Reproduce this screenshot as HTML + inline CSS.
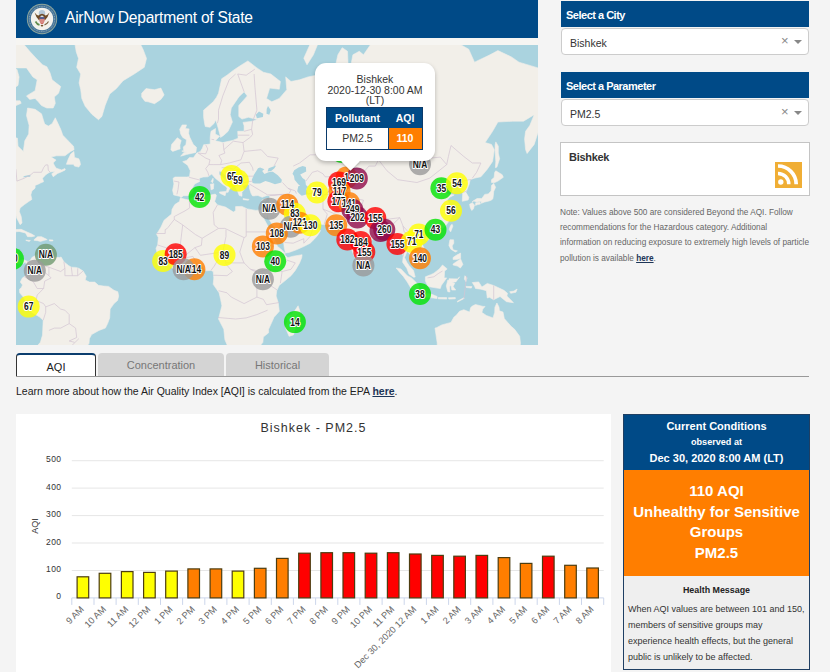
<!DOCTYPE html>
<html><head><meta charset="utf-8">
<style>
*{box-sizing:border-box;margin:0;padding:0}
html,body{width:830px;height:672px;overflow:hidden;background:#f4f4f4;font-family:"Liberation Sans",sans-serif;color:#333}
.abs{position:absolute}
#hdr{left:16px;top:0;width:522px;height:38px;background:#004a87}
#hdr .t{left:49px;top:8.5px;font-size:15.6px;letter-spacing:-0.25px;color:#fff;white-space:nowrap}
#strip{left:16px;top:38px;width:522px;height:7px;background:#f6f5f2}
#map{left:16px;top:45px;width:522px;height:300px;background:#aad3df;overflow:hidden}
.ph{left:561px;width:248px;height:26px;background:#004a87;color:#fff;font-weight:bold;font-size:11px;letter-spacing:-0.5px;padding:8px 0 0 5px}
.sel{left:561px;width:248px;height:27px;background:#fff;border:1px solid #ccc;border-radius:4px;font-size:10.5px;color:#333;padding:8px 0 0 8px}
.sel .x{position:absolute;left:219px;top:4px;font-size:13px;color:#888}
.sel .c{position:absolute;left:232px;top:11px;width:0;height:0;border-left:4px solid transparent;border-right:4px solid transparent;border-top:4px solid #888}
#cbox{left:560px;top:142px;width:250px;height:54px;background:#fff;border:1px solid #c4c4c4}
#cbox .n{left:8px;top:7.5px;font-weight:bold;font-size:11px;letter-spacing:-0.3px;color:#333}
#rss{left:775px;top:162px;width:27px;height:26px;background:#f0ae35}
#note{left:560px;top:205px;width:260px;white-space:nowrap;font-size:8.25px;line-height:15.2px;color:#666}
#note a{color:#1d3557;font-weight:bold;text-decoration:underline}
.tab{top:353px;height:23px;font-size:11px;text-align:center;padding-top:6px;border-radius:4px 4px 0 0}
#t1{left:16px;width:80px;background:#fff;border:1px solid #333;border-top:2px solid #0b3d6e;border-bottom:none;color:#222}
#t2{left:98px;width:126px;background:#d4d4d4;color:#777}
#t3{left:226px;width:103px;background:#d4d4d4;color:#777}
#tline{left:16px;top:376px;width:793px;height:1px;background:#999}
#learn{left:16px;top:385px;font-size:10.5px;color:#222;white-space:nowrap}
#learn a{color:#1d3557;text-decoration:underline;font-weight:bold}
#chart{left:16px;top:414px;width:595px;height:258px;background:#fff}
#cc{left:623px;top:414px;width:187px;height:256px;border:1px solid #1f3f63;background:#efefef}
#cch{left:0;top:0;width:185px;height:55px;background:#004a87;color:#fff;font-weight:bold;text-align:center}
#cco{left:0;top:55px;width:185px;height:106px;background:#ff7e00;color:#fff;font-weight:bold;text-align:center;font-size:15px;line-height:20.7px;padding-top:11px}
#hm{left:0;top:162.5px;width:185px;text-align:center}
</style></head><body>
<div id="hdr" class="abs">
  <svg class="abs" style="left:10px;top:3px" width="32" height="32" viewBox="0 0 32 32">
    <circle cx="16" cy="16" r="15.2" fill="#8fa79c"/>
    <circle cx="16" cy="16" r="14.3" fill="#3f6f96"/>
    <circle cx="16" cy="16" r="12.6" fill="none" stroke="#b9c9c8" stroke-width="0.7" stroke-dasharray="1 0.8"/>
    <circle cx="16" cy="16" r="11.2" fill="#f3f1eb"/>
    <circle cx="16" cy="10.2" r="3.2" fill="#b4c8d6"/>
    <path d="M8.6 9.5 Q10 14.5 13.2 17.6 L14.6 13.2 L16 12.2 L17.4 13.2 L18.8 17.6 Q22 14.5 23.4 9.5 Q21.5 12.2 19.4 12.6 Q18.6 11.2 16 10.8 Q13.4 11.2 12.6 12.6 Q10.5 12.2 8.6 9.5Z" fill="#6e4b26"/>
    <path d="M13.6 14.2 h4.8 v3.8 q0 2.6 -2.4 3.4 q-2.4 -0.8 -2.4 -3.4Z" fill="#c8504a"/>
    <rect x="13.6" y="14.2" width="4.8" height="1.6" fill="#3b5f9a"/>
    <path d="M14.8 16 v4 M16 16 v4.6 M17.2 16 v4" stroke="#f3f1eb" stroke-width="0.5"/>
    <path d="M9.5 18.5 q1.5 2.8 4 3.4" stroke="#5f8a4a" stroke-width="1.6" fill="none"/>
    <path d="M22.5 18.5 q-1.5 2.8 -4 3.4" stroke="#7a6040" stroke-width="1.1" fill="none"/>
    <path d="M14.5 22 l1.5 2 l1.5 -2Z" fill="#6e4b26"/>
  </svg>
  <div class="t abs">AirNow Department of State</div>
</div>
<div id="strip" class="abs"></div>
<div id="map" class="abs"><svg width="522" height="300" viewBox="0 0 522 300" style="position:absolute;left:0;top:0"><rect width="522" height="300" fill="#aad3df"/><path d="M165.0 152.6L163.5 151.3L157.7 149.9L156.6 145.3L157.9 139.0L157.1 133.2L159.0 132.0L170.5 132.0L173.5 131.8L174.3 125.8L171.6 120.2L166.7 116.7L170.5 115.4L173.5 112.5L177.3 112.8L180.7 108.1L184.4 106.4L186.5 103.0L187.6 99.8L194.2 99.1L194.2 92.1L195.0 86.3L199.5 83.5L199.3 89.0L203.6 91.3L199.3 95.8L206.8 97.6L216.6 95.4L222.1 93.2L221.7 86.3L228.1 86.3L228.1 80.7L227.0 77.4L236.6 76.2L241.3 74.5L232.4 72.3L226.0 74.1L222.8 71.5L222.8 60.6L231.3 50.9L228.1 46.8L222.8 51.9L215.3 63.0L214.2 69.7L216.4 77.0L212.1 86.3L207.8 90.2L204.6 92.4L202.3 83.5L200.8 78.3L199.5 74.9L198.2 78.3L194.0 82.3L189.3 81.5L188.6 78.7L187.6 71.9L187.6 65.2L191.8 61.6L197.2 56.8L200.4 52.4L202.5 48.3L205.7 33.7L211.0 30.2L217.2 25.4L223.8 21.0L231.9 15.9L240.9 22.9L247.3 27.2L254.8 29.0L264.4 36.5L263.3 44.2L253.7 43.1L250.5 53.4L255.8 56.8L263.3 53.4L270.8 44.7L269.7 31.9L275.0 36.5L283.6 34.8L292.1 31.9L300.6 30.2L304.9 26.0L317.7 29.0L321.9 9.8L326.2 2.7L331.5 6.3L332.6 31.9L336.9 9.8L343.3 6.3L347.5 9.8L368.9 -21.3L390.2 -40.3L411.5 -4.8L417.9 -1.0L443.5 -1.0L452.7 4.2L458.5 17.2L474.0 9.8L481.9 5.6L495.4 11.9L503.0 17.2L522.0 22.9L550.2 26.0L550.2 65.2L524.6 65.2L522.4 86.3L518.2 99.4L511.1 108.5L509.6 104.7L508.6 93.9L509.6 86.3L513.9 80.3L518.2 69.7L507.5 76.2L496.9 76.2L481.9 77.0L476.6 86.3L469.1 97.6L475.5 99.4L478.3 104.7L476.6 116.4L471.3 124.2L464.9 131.8L458.2 133.2L454.2 134.7L453.1 139.5L449.9 147.3L452.9 152.6L452.1 155.0L446.3 156.3L446.7 148.6L443.5 143.2L437.6 140.4L435.0 139.2L430.7 144.0L428.6 145.1L430.3 148.6L438.2 149.9L433.3 152.6L431.2 155.2L434.6 161.6L436.9 165.6L436.7 169.8L432.9 176.1L429.7 180.8L425.4 184.6L420.5 186.2L413.7 188.0L412.0 190.8L409.4 187.8L404.5 189.9L402.6 193.7L406.2 199.3L409.8 207.0L409.8 210.3L404.7 212.9L400.9 216.6L400.4 213.1L396.6 211.4L392.3 207.7L391.3 205.9L388.5 212.5L390.8 217.2L393.0 220.5L397.5 225.4L399.2 232.0L397.7 232.2L393.0 229.0L390.8 223.3L386.6 217.2L387.2 211.4L385.3 201.5L381.7 198.6L378.0 200.4L377.8 194.6L374.2 188.0L372.1 185.5L367.8 187.3L364.6 186.9L362.0 190.1L358.2 192.8L352.4 199.1L348.0 206.6L347.1 212.9L343.9 215.9L342.2 217.7L339.6 214.2L336.9 208.1L334.1 200.4L332.2 193.7L332.0 188.7L327.3 189.6L323.7 185.7L325.1 185.0L319.8 180.4L313.4 179.2L308.1 179.7L300.0 178.2L296.8 174.9L292.1 175.9L286.7 173.0L284.2 169.6L280.4 167.9L279.3 169.3L282.9 176.1L284.6 178.7L287.0 179.2L286.1 181.5L292.1 181.8L296.8 178.7L297.0 176.8L297.2 180.4L302.3 183.4L304.5 185.7L301.7 190.3L298.5 193.9L294.2 198.2L288.2 201.3L280.4 204.8L272.9 207.5L269.5 207.9L268.2 202.6L267.8 198.6L264.4 192.6L260.5 188.0L259.0 182.9L255.8 178.7L252.0 172.5L251.6 169.1L250.1 173.2L246.4 168.1L248.4 174.7L252.6 182.2L256.2 189.2L259.0 196.0L261.6 201.5L264.8 204.0L269.0 208.3L269.0 210.3L271.8 212.7L277.2 211.2L286.1 209.7L285.7 212.7L283.6 217.9L279.3 225.4L275.0 230.7L268.6 236.1L263.3 240.3L260.7 245.7L260.1 251.0L262.2 257.5L263.3 266.3L258.0 272.3L252.6 284.3L252.6 287.8L247.3 292.0L246.9 297.3L244.1 300.9L240.9 305.9L236.6 309.6L215.3 309.6L208.9 294.8L207.8 284.3L202.5 274.0L205.9 260.8L204.6 254.3L203.1 247.8L197.2 239.3L197.8 232.9L197.2 226.5L195.0 225.4L189.7 225.8L186.5 221.5L181.2 221.5L173.7 224.3L168.4 223.9L160.9 225.6L156.6 223.3L152.4 220.0L148.5 216.8L144.9 211.8L141.1 208.3L140.0 203.3L141.7 199.8L142.3 192.6L140.6 189.2L144.9 182.2L148.1 175.2L155.6 169.1L156.0 164.4L158.8 159.6L163.5 156.5L164.3 153.1L172.6 155.0L179.0 151.3L187.6 150.5L195.0 149.9L199.3 149.1L200.4 150.5L198.7 156.5L201.4 159.9L209.5 162.1L217.4 167.1L219.6 165.4L219.6 161.6L226.0 161.4L231.3 163.9L239.8 165.4L245.8 164.9L250.1 164.6L251.6 160.9L253.5 156.0L253.7 150.5L250.5 150.7L246.2 152.3L242.0 150.5L236.6 151.0L235.1 148.6L233.4 143.2L233.4 140.4L232.4 139.5L226.0 140.4L228.1 144.5L226.0 147.3L226.0 151.3L223.2 150.5L221.7 146.4L220.0 143.2L218.5 139.0L217.9 134.7L211.0 131.8L205.9 126.7L203.1 126.1L203.1 129.4L205.9 131.8L211.0 137.8L216.4 141.5L213.2 144.5L212.1 147.3L210.2 147.3L211.2 143.2L210.0 141.5L206.8 139.5L203.6 136.7L199.3 133.2L195.7 129.1L191.8 131.8L187.1 132.0L183.3 133.2L183.7 136.4L178.6 139.0L176.3 143.2L177.3 145.3L175.4 148.3L172.4 150.7L167.5 150.7ZM164.7 111.2L170.5 109.5L179.9 107.4L180.5 102.3L177.3 99.4L173.7 92.1L172.6 88.3L173.1 83.9L169.4 83.5L170.5 79.9L166.2 79.9L163.7 84.3L164.7 89.0L166.7 92.4L170.5 94.7L169.9 99.8L167.3 101.9L167.7 105.7L165.8 106.1L170.5 107.4L167.9 107.4ZM164.1 104.0L163.9 100.1L165.2 95.4L161.3 92.8L158.8 95.8L155.6 99.4L154.9 104.7L156.6 106.4L162.4 104.4ZM125.7 48.3L130.0 43.6L138.5 44.7L144.9 43.1L148.1 49.9L144.9 54.4L138.5 58.7L132.1 56.8L128.9 56.3L125.7 51.9ZM194.4 139.2L197.8 138.7L197.4 144.0L195.0 144.8L194.8 141.8ZM195.2 136.4L197.0 133.2L197.2 135.5L196.5 137.8ZM203.3 147.0L210.2 146.4L209.1 150.7L203.8 148.3ZM227.0 153.6L233.0 154.4L232.4 155.2L227.2 154.7ZM245.8 155.0L250.7 153.6L249.2 155.5L246.4 156.0ZM347.3 214.0L350.3 216.8L351.4 219.6L348.6 222.4L347.1 220.0ZM475.5 137.5L478.1 137.8L481.9 136.1L487.3 132.3L486.2 129.7L479.8 125.8L478.7 127.3L478.1 132.6L475.5 134.7ZM477.7 138.4L479.6 142.3L477.7 146.4L477.4 150.2L476.8 153.9L475.1 155.2L473.0 156.0L468.7 157.0L465.3 158.3L465.1 156.3L460.6 157.0L457.8 156.0L456.1 157.0L457.2 156.0L461.0 153.6L465.9 153.4L468.7 149.4L472.3 148.9L475.1 145.9L475.5 140.4ZM459.5 160.4L459.7 157.8L464.0 157.3L464.4 159.1L461.7 159.6ZM453.6 159.3L456.3 157.8L458.5 159.9L457.4 164.1L455.7 165.4L454.2 162.4ZM479.8 96.9L482.3 101.2L482.3 108.1L483.6 113.8L480.9 122.1L479.4 122.7L479.8 116.4L479.1 106.4L479.1 100.1ZM436.1 179.2L436.9 181.1L434.6 186.9L433.1 184.3L434.6 180.6ZM408.5 193.3L412.6 191.2L413.7 192.4L412.2 195.1L410.0 195.3ZM433.9 194.8L437.6 194.8L437.8 198.2L436.1 200.9L437.1 204.8L441.4 205.9L439.3 207.0L434.8 204.2L432.9 200.4ZM437.1 219.0L440.3 216.8L444.6 214.0L446.9 219.4L444.4 223.0L441.4 221.1L437.1 220.0ZM437.1 212.5L440.3 210.3L444.6 208.1L444.6 213.6L440.3 214.6L437.1 214.6ZM409.4 231.8L414.7 229.7L417.9 228.2L423.3 223.9L426.5 220.0L431.2 223.9L428.6 226.0L428.2 232.9L430.7 232.9L425.4 240.3L424.3 243.5L421.1 243.1L414.9 242.0L412.0 241.4L409.4 236.1ZM380.2 223.0L384.9 223.9L391.3 230.7L395.5 232.9L399.8 237.1L403.0 241.4L402.6 247.6L399.8 247.6L395.1 243.5L391.3 237.1L387.4 231.4L383.8 227.5ZM401.3 249.5L403.0 247.6L407.9 248.5L413.7 248.7L417.1 249.8L421.1 251.5L420.9 253.6L413.7 252.6L407.3 251.7L401.9 249.8ZM422.2 252.6L430.7 252.6L430.7 254.1L422.2 253.8ZM432.4 252.8L439.3 252.6L439.3 253.8L432.9 254.1ZM441.4 256.2L447.8 252.8L448.2 253.4L441.4 257.1ZM431.8 246.7L433.9 247.0L433.5 241.4L435.0 240.5L435.8 245.0L439.7 245.0L437.1 241.4L438.8 238.2L436.1 237.1L439.9 236.9L443.5 231.8L442.2 233.9L433.1 233.7L432.9 235.6L431.8 235.0L430.3 241.0ZM448.9 230.7L451.0 232.9L449.9 236.7L448.4 233.9ZM449.9 241.4L455.9 241.6L455.3 243.1L450.4 242.5ZM456.3 237.6L462.7 236.9L465.9 242.0L471.3 238.4L477.7 240.5L487.9 245.3L491.5 248.3L490.9 251.0L495.4 255.6L497.5 257.7L490.5 256.7L484.1 251.5L477.7 254.7L473.4 252.3L471.3 253.0L470.4 245.7L464.9 244.2L459.5 243.5L458.5 241.0ZM493.7 246.7L497.9 246.1L501.1 244.0L500.0 247.2L494.7 248.3ZM282.1 260.8L284.4 267.8L282.5 272.9L280.4 279.7L277.4 289.9L273.1 291.3L270.1 284.3L269.3 282.0L271.6 276.3L270.8 271.8L275.9 269.1L278.9 265.6ZM419.0 283.1L420.5 282.7L425.8 279.9L435.0 277.4L437.8 272.3L440.5 270.0L443.5 266.3L447.8 264.7L453.6 267.1L454.6 262.8L456.3 261.0L459.5 259.5L467.0 261.4L469.1 261.4L466.8 264.1L465.9 267.4L470.4 270.5L477.0 272.9L478.7 267.4L478.9 262.3L480.9 258.0L483.0 262.1L483.4 265.8L487.0 267.1L488.3 273.6L491.5 277.2L495.1 281.3L498.6 284.3L503.7 291.3L504.5 298.5L503.2 305.9L496.9 320.1L422.2 314.8L421.1 297.3ZM287.8 13.2L294.2 -1.0L298.5 -17.0L309.1 -25.8L321.9 -30.5L304.9 -8.7L297.4 9.8L291.0 19.8ZM-79.1 191.4L-79.1 74.1L-25.7 74.1L-19.3 86.3L-10.8 90.2L1.4 93.2L2.0 101.2L7.3 106.4L8.8 95.8L12.7 89.0L13.1 80.3L10.5 70.6L11.6 63.0L19.1 64.3L25.5 68.8L27.6 75.7L28.7 79.1L32.3 81.1L36.1 78.7L39.3 72.8L44.7 84.3L46.8 90.2L52.1 95.8L57.5 101.2L58.1 104.7L54.7 106.4L48.9 110.8L40.4 110.8L35.1 112.1L40.0 115.1L37.2 118.0L38.7 121.1L40.4 123.3L45.7 124.9L48.9 123.6L49.3 124.9L46.4 126.4L41.5 128.5L37.2 131.8L35.7 128.8L39.3 126.4L34.0 127.0L30.1 129.4L26.5 133.2L27.6 136.7L24.4 138.1L23.3 138.7L19.1 140.4L19.1 143.2L15.9 145.9L14.8 149.9L15.9 154.4L12.7 156.5L8.4 159.6L4.1 162.9L3.3 166.6L5.2 171.5L6.0 178.0L4.1 179.7L2.4 176.3L0.5 172.7L-0.1 169.8L-2.3 167.9L-15.1 170.3L-30.0 177.5L-30.0 189.2L-27.9 193.7L-17.2 194.8L-16.1 189.2L-8.7 188.0L-9.7 196.0L-10.8 200.4L-2.3 200.9L-1.2 203.7L-1.8 211.4L-0.1 213.6L3.1 215.7L7.3 214.6L11.6 216.4L13.7 216.2L15.9 212.5L18.6 211.0L22.3 209.4L24.8 208.3L24.4 211.8L27.2 210.3L31.2 212.5L36.1 212.3L40.4 212.3L43.6 212.5L45.1 212.0L47.9 216.8L52.5 220.5L55.3 222.2L59.6 222.4L62.8 223.3L67.1 226.0L70.2 231.2L69.2 235.0L73.4 237.1L78.8 237.1L82.4 240.3L87.3 241.0L92.6 241.4L98.0 245.3L101.8 246.7L102.7 251.0L101.6 255.4L98.0 258.6L94.1 264.1L93.7 272.9L91.6 278.6L89.4 283.1L83.0 285.4L75.6 289.6L73.4 293.7L73.0 298.5L70.2 302.1L48.9 328.2L16.9 328.2L20.1 302.1L24.4 297.3L26.5 290.1L27.2 275.2L23.3 271.8L15.9 267.4L13.7 263.0L11.0 258.6L7.3 252.1L3.7 247.8L3.5 244.2L5.6 242.3L6.5 239.9L4.3 237.1L6.3 233.1L8.4 231.6L10.5 229.5L12.0 226.5L11.8 220.9L10.5 219.6L9.5 217.0L6.3 219.0L5.2 217.4L2.8 219.0L-0.8 217.2L-6.1 213.6L-15.1 207.0L-47.1 191.4ZM-15.1 2.7L6.3 -2.5L13.7 6.3L20.1 13.2L26.5 19.8L30.8 21.7L34.0 27.8L36.1 34.8L44.7 41.5L42.5 48.3L38.3 51.9L39.3 58.3L37.2 63.0L30.8 63.0L25.5 60.6L22.3 56.8L19.1 53.4L13.7 54.4L10.5 50.9L19.1 45.7L21.2 34.8L16.9 31.9L10.5 22.9L-2.3 22.9L-15.1 22.9ZM-6.5 55.8L4.1 55.8L5.2 58.3L-2.3 61.6L-8.7 58.3ZM-36.4 74.1L-23.6 69.7L-15.1 55.8L-8.7 53.4L-7.6 43.1L-2.3 43.1L2.0 40.4L3.1 31.9L0.9 24.2L-4.4 24.2L-15.1 29.0L-36.4 34.8ZM50.4 119.3L57.5 119.3L58.5 121.1L62.8 122.1L64.5 119.6L63.9 116.4L62.8 113.8L58.5 112.5L57.9 106.4L54.7 109.1L52.1 114.4ZM-4.4 187.1L-0.1 184.6L5.2 184.3L11.6 187.3L15.6 188.9L18.8 191.0L15.9 191.7L11.6 191.7L9.5 188.0L3.1 186.4L-3.3 187.3ZM18.0 194.8L21.6 191.7L25.5 191.7L28.7 193.3L31.2 194.6L28.7 195.3L24.4 196.4L21.6 195.7L18.0 195.3ZM9.7 195.1L14.4 195.5L13.1 196.4L10.1 195.5ZM33.3 194.8L37.0 195.1L36.8 196.0L33.6 196.0ZM59.1 0.0L60.2 6.7L62.5 13.4L60.7 22.3L64.7 29.0L63.1 37.9L64.7 44.6L65.8 53.5L69.2 61.3L75.8 69.2L82.5 74.7L85.9 71.4L89.2 60.2L93.7 49.1L100.4 43.5L107.1 35.7L118.2 29.0L128.3 22.3L130.5 13.4L127.1 4.5L124.9 0.0L124.9 -10.0L59.0 -10.0Z" fill="#f2efe9" stroke="#f2efe9" stroke-width="0.6" stroke-linejoin="round"/><path d="M236.6 138.1L239.0 138.4L244.1 138.4L249.4 136.1L253.7 137.3L259.0 139.2L265.4 137.5L265.8 134.7L261.8 130.3L256.9 126.7L254.8 126.7L252.6 127.3L248.4 129.1L246.2 126.1L248.4 124.2L244.1 122.4L242.0 123.3L240.0 126.4L237.9 129.7L235.8 134.7ZM251.6 126.4L252.6 123.3L260.1 120.5L258.4 123.3L255.2 126.1ZM282.5 122.4L286.7 121.1L289.9 122.1L290.2 126.4L285.7 128.8L284.2 129.4L286.5 132.9L289.3 135.0L289.9 140.1L291.9 141.8L290.4 144.0L291.9 149.1L285.7 150.7L283.1 148.6L281.2 146.2L282.3 141.2L284.2 140.6L282.5 139.5L278.6 134.7L278.0 130.9L276.5 128.8L278.2 125.2ZM6.7 132.3L14.2 131.8L14.4 129.7L8.4 130.9ZM240.9 73.2L246.9 71.9L247.3 68.8L243.0 66.6L239.8 69.7ZM250.5 68.8L253.3 69.7L254.8 65.2L252.0 61.1L250.7 63.9ZM333.7 123.6L336.9 122.4L345.4 123.3L344.3 124.9L335.8 124.5Z" fill="#aad3df"/><path d="M173.3 155.2L173.7 162.9L169.0 165.9L158.3 171.5L158.3 174.4L166.7 179.9L179.5 189.6L186.1 193.3L202.5 183.4L198.2 179.9L197.2 167.4L201.4 159.9M158.3 174.4L151.3 183.4L149.2 184.6L149.2 188.5L140.6 188.5M166.7 179.9L164.1 201.5L151.3 203.1L141.7 200.0M230.2 163.9L230.2 186.9L255.8 186.9M202.5 183.4L208.9 183.4L228.1 192.6L230.2 191.4L230.2 186.9M228.1 192.6L223.8 207.0L227.0 215.7L228.1 217.9L234.5 224.3L240.9 227.5L251.6 224.3L266.1 226.5L264.4 238.2M210.0 184.6L210.0 191.4L206.8 207.0L184.4 210.3L179.0 202.6L165.2 213.6L158.8 219.0M186.1 193.3L185.4 200.4L179.0 202.6M206.8 207.0L210.0 217.9L228.1 217.9M259.0 196.0L254.8 204.8L249.4 215.7L251.6 224.3M267.6 208.1L269.3 214.6L279.3 217.9L275.0 224.3L266.1 226.5M202.5 245.7L211.0 247.8L215.3 252.1L228.1 258.6L240.9 252.1L240.9 237.1L239.8 225.4L234.5 224.3M261.2 245.0L249.4 237.1L240.9 237.1M263.3 257.5L250.5 259.7L247.3 254.3L240.9 252.1M202.1 272.5L219.6 274.0L230.2 272.9L240.9 269.6L251.6 265.2M197.2 230.3L201.0 230.3L211.0 230.7L216.4 226.5L208.9 217.9M152.4 220.0L159.8 216.8L165.2 213.6L176.9 211.4L182.2 221.5M195.0 225.4L198.2 221.1L206.8 207.0M173.1 132.3L183.7 135.0M158.1 136.1L163.0 137.0L162.0 144.5L160.9 149.4M182.2 108.1L189.7 113.1L194.0 114.8L192.9 119.6L189.7 123.6L191.8 127.3L192.9 130.9M195.5 94.3L198.2 94.7M207.2 98.0L207.8 104.7L208.9 108.1L202.9 110.5L205.7 115.4L204.6 119.6L197.2 119.6L192.9 119.6M189.7 99.8L191.8 104.0L189.7 108.8L182.2 108.1M207.8 104.7L217.4 96.2L227.0 97.6L228.1 106.4L224.9 114.8L213.2 118.0L204.6 119.6M205.7 122.7L212.1 122.7L217.4 124.2L224.9 118.0L233.4 117.3L236.6 122.7L237.1 125.8M224.9 130.3L230.2 131.2L237.7 131.2M217.9 134.7L221.7 135.5L224.9 138.4L232.4 136.7L236.6 136.1M228.1 106.4L245.2 104.7L251.6 111.5L262.2 113.1L258.0 121.1M227.0 97.6L234.5 92.1L236.6 89.4L235.6 84.3L236.6 76.2M228.1 86.3L235.6 84.3M221.7 90.2L233.4 90.2M238.1 29.0L238.8 40.4L240.9 65.2L236.6 76.2M221.7 29.0L228.1 46.8M219.6 29.0L213.2 34.8L206.8 50.9L202.5 65.2L202.5 74.1L201.4 78.3M238.8 24.2L230.2 30.2L221.7 29.0M233.4 139.0L251.6 149.9L266.5 149.4L272.5 149.4L275.0 145.1L271.8 143.2L266.5 137.5M253.7 150.5L258.0 150.5L266.5 149.4M252.6 159.1L259.0 159.1L264.4 156.5L267.6 149.9M260.1 162.9L266.5 164.1L276.1 170.3L279.3 169.3M254.8 169.1L255.8 164.1L260.1 162.9M271.8 143.2L279.3 145.9L280.4 148.6M272.5 149.4L275.0 155.2L275.0 160.4L279.3 167.9M287.8 198.2L294.2 191.4L296.3 185.7M268.6 197.5L277.2 198.2L287.8 193.7L287.8 198.2M307.0 149.9L307.0 164.1L311.3 169.1L308.1 179.7M305.9 151.3L298.5 147.3L291.9 149.1M307.0 149.9L319.8 149.1L326.2 145.9L334.7 149.9M307.0 164.1L317.7 168.4L326.2 165.4L328.3 157.8L334.7 149.9M334.7 149.9L341.1 153.9L347.5 155.2L345.4 161.6L349.7 167.9L364.6 173.2L373.1 174.0L383.8 172.7M328.3 157.8L334.7 157.8L336.9 161.6L335.8 166.6L330.5 172.7L327.3 178.7L323.7 182.2M364.6 173.2L365.0 176.3L366.7 186.9M373.1 186.9L374.2 182.2L377.4 178.7L383.8 172.7M383.8 172.7L387.0 181.1L392.3 186.9L394.5 185.7L403.0 185.0L407.3 187.8M387.0 181.1L388.1 186.9L392.3 189.2L392.3 193.7L389.1 196.0L387.0 200.4L388.1 204.8L387.2 211.4M392.3 193.7L398.7 196.0L403.0 200.4L406.2 204.8L403.0 209.2L396.6 211.4M403.0 185.0L398.7 189.2L400.9 196.0L405.1 201.5L403.0 209.2M277.2 121.1L283.6 118.0L294.2 109.8L307.0 109.8L321.9 94.7L332.6 97.6L340.1 97.6L347.5 108.1L362.5 114.8M289.9 136.1L296.3 127.3L301.7 125.8L307.0 128.8L309.1 131.8L315.5 131.8L319.8 138.4L328.3 133.8L335.8 133.2L347.5 134.7L347.5 127.3L352.9 121.1L359.3 121.1L362.5 114.8M291.9 149.1L300.6 147.3L307.0 151.3L313.4 145.9L318.7 139.0L319.8 138.4M334.7 149.9L328.3 143.2L332.6 143.2L339.0 140.4L347.5 134.7M362.5 114.8L371.0 125.8L381.7 134.7L400.9 137.5L413.7 133.2L430.7 119.6L424.3 112.1L407.3 113.8L385.9 104.7L373.1 108.8L362.5 114.8M430.7 119.6L432.4 111.5L435.0 100.5L447.8 111.5L456.3 118.0L464.9 118.0L460.6 127.3L456.3 133.2M442.5 141.8L446.7 136.1L453.1 134.7L455.5 134.7M445.7 147.8L451.0 145.9M450.6 230.7L447.8 254.3M477.7 240.5L477.7 254.7M426.5 226.0L422.2 228.6L417.9 231.8L411.5 232.9M11.6 216.4L12.7 226.5L27.6 226.5L32.9 230.7L35.1 232.9L28.7 236.1L27.6 243.5L21.2 243.5L16.9 236.1L8.4 231.8M23.3 209.2L22.3 219.0L32.9 222.2L32.9 230.7M32.9 222.2L44.7 226.5L48.9 223.3L47.9 216.8M48.9 223.3L48.9 230.7L56.4 230.7L55.3 222.2M56.4 230.7L61.7 230.7L61.7 223.3M61.7 230.7L67.1 226.0M27.6 243.5L21.2 250.0L20.1 255.4L27.6 258.6L29.7 261.9L29.7 267.4L27.2 275.2M29.7 261.9L38.3 258.6L44.7 264.1L48.9 265.2L53.2 269.6L53.2 278.6L44.7 283.1L38.3 283.1L32.9 285.4M53.2 278.6L59.6 283.1L60.7 292.5L53.2 296.0L58.5 297.3M62.8 293.7L54.3 302.1L62.8 310.9M-85.5 114.8L-25.7 114.8L-12.9 118.0L-0.1 124.2L0.9 136.1L8.4 133.2L14.8 129.7L17.6 127.3L25.5 127.3L27.6 122.7L29.7 119.9L31.9 119.9L32.3 125.2L34.0 127.0M-19.3 196.0L-15.1 196.4L-12.9 200.4L-11.9 203.7L-8.7 207.0L-4.4 203.7L-1.2 203.7M-6.1 211.4L-1.6 211.4M0.1 214.6L0.7 217.2" fill="none" stroke="#d2c4d2" stroke-width="0.7" stroke-linejoin="round"/><g><circle cx="-3.0" cy="213.8" r="11" fill="#00e400" fill-opacity="0.8"/><circle cx="29.9" cy="209.8" r="11" fill="#6f9a6f" fill-opacity="0.8"/><circle cx="18.8" cy="225.8" r="11" fill="#9a9a9a" fill-opacity="0.8"/><circle cx="12.7" cy="261.6" r="11" fill="#ffff00" fill-opacity="0.8"/><circle cx="147.1" cy="215.9" r="11" fill="#ffff00" fill-opacity="0.8"/><circle cx="159.7" cy="209.3" r="11" fill="#ff0000" fill-opacity="0.8"/><circle cx="178.4" cy="224.3" r="11" fill="#ff7e00" fill-opacity="0.8"/><circle cx="167.6" cy="224.3" r="11" fill="#9a9a9a" fill-opacity="0.8"/><circle cx="208.5" cy="209.9" r="11" fill="#ffff00" fill-opacity="0.8"/><circle cx="183.6" cy="151.9" r="11" fill="#00e400" fill-opacity="0.8"/><circle cx="215.6" cy="130.9" r="11" fill="#ffff00" fill-opacity="0.8"/><circle cx="221.9" cy="135.6" r="11" fill="#ffff00" fill-opacity="0.8"/><circle cx="278.9" cy="277.1" r="11" fill="#00e400" fill-opacity="0.8"/><circle cx="253.4" cy="163.8" r="11" fill="#9a9a9a" fill-opacity="0.8"/><circle cx="271.4" cy="159.7" r="11" fill="#ff7e00" fill-opacity="0.8"/><circle cx="278.8" cy="168.7" r="11" fill="#ffff00" fill-opacity="0.8"/><circle cx="274.7" cy="181.8" r="11" fill="#9a9a9a" fill-opacity="0.8"/><circle cx="283.7" cy="177.7" r="11" fill="#ff7e00" fill-opacity="0.8"/><circle cx="294.3" cy="180.2" r="11" fill="#ffff00" fill-opacity="0.8"/><circle cx="260.8" cy="188.4" r="11" fill="#ff7e00" fill-opacity="0.8"/><circle cx="246.9" cy="201.4" r="11" fill="#ff7e00" fill-opacity="0.8"/><circle cx="259.2" cy="216.2" r="11" fill="#00e400" fill-opacity="0.8"/><circle cx="246.9" cy="234.2" r="11" fill="#9a9a9a" fill-opacity="0.8"/><circle cx="301.0" cy="147.5" r="11" fill="#ffff00" fill-opacity="0.8"/><circle cx="326.0" cy="107.0" r="11" fill="#00e400" fill-opacity="0.8"/><circle cx="330.6" cy="132.6" r="11" fill="#ff7e00" fill-opacity="0.8"/><circle cx="340.8" cy="133.4" r="11" fill="#900a4a" fill-opacity="0.8"/><circle cx="323.0" cy="137.4" r="11" fill="#ff0000" fill-opacity="0.8"/><circle cx="323.5" cy="146.3" r="11" fill="#ff7e00" fill-opacity="0.8"/><circle cx="322.4" cy="156.3" r="11" fill="#ff0000" fill-opacity="0.8"/><circle cx="333.0" cy="158.0" r="11" fill="#ff7e00" fill-opacity="0.8"/><circle cx="336.4" cy="164.7" r="11" fill="#900a4a" fill-opacity="0.8"/><circle cx="341.4" cy="172.5" r="11" fill="#900a4a" fill-opacity="0.8"/><circle cx="359.3" cy="173.1" r="11" fill="#ff0000" fill-opacity="0.8"/><circle cx="320.2" cy="180.3" r="11" fill="#ff7e00" fill-opacity="0.8"/><circle cx="331.3" cy="194.5" r="11" fill="#ff0000" fill-opacity="0.8"/><circle cx="344.7" cy="197.1" r="11" fill="#ff0000" fill-opacity="0.8"/><circle cx="348.3" cy="207.0" r="11" fill="#ff0000" fill-opacity="0.8"/><circle cx="347.4" cy="220.4" r="11" fill="#9a9a9a" fill-opacity="0.8"/><circle cx="404.0" cy="119.3" r="11" fill="#9a9a9a" fill-opacity="0.8"/><circle cx="425.4" cy="143.2" r="11" fill="#00e400" fill-opacity="0.8"/><circle cx="440.9" cy="138.3" r="11" fill="#ffff00" fill-opacity="0.8"/><circle cx="435.0" cy="165.7" r="11" fill="#ffff00" fill-opacity="0.8"/><circle cx="364.5" cy="186.0" r="11" fill="#900a4a" fill-opacity="0.8"/><circle cx="368.3" cy="184.8" r="11" fill="#900a4a" fill-opacity="0.8"/><circle cx="381.4" cy="199.0" r="11" fill="#ff0000" fill-opacity="0.8"/><circle cx="402.8" cy="189.5" r="11" fill="#ffff00" fill-opacity="0.8"/><circle cx="395.7" cy="196.7" r="11" fill="#ffff00" fill-opacity="0.8"/><circle cx="419.5" cy="184.8" r="11" fill="#00e400" fill-opacity="0.8"/><circle cx="404.0" cy="213.3" r="11" fill="#ff7e00" fill-opacity="0.8"/><circle cx="404.0" cy="249.0" r="11" fill="#00e400" fill-opacity="0.8"/></g><g font-family="Liberation Sans" font-size="10" font-weight="bold" text-anchor="middle" fill="#111" stroke="#fff" stroke-width="2.2" stroke-linejoin="round" paint-order="stroke"><text transform="translate(-3.0 217.4) scale(0.84 1)">60</text><text transform="translate(29.9 213.4) scale(0.84 1)">N/A</text><text transform="translate(18.8 229.4) scale(0.84 1)">N/A</text><text transform="translate(12.7 265.2) scale(0.84 1)">67</text><text transform="translate(147.1 219.5) scale(0.84 1)">83</text><text transform="translate(159.7 212.9) scale(0.84 1)">185</text><text transform="translate(178.4 227.9) scale(0.84 1)">114</text><text transform="translate(167.6 227.9) scale(0.84 1)">N/A</text><text transform="translate(208.5 213.5) scale(0.84 1)">89</text><text transform="translate(183.6 155.5) scale(0.84 1)">42</text><text transform="translate(215.6 134.5) scale(0.84 1)">65</text><text transform="translate(221.9 139.2) scale(0.84 1)">59</text><text transform="translate(278.9 280.7) scale(0.84 1)">14</text><text transform="translate(253.4 167.4) scale(0.84 1)">N/A</text><text transform="translate(271.4 163.3) scale(0.84 1)">114</text><text transform="translate(278.8 172.3) scale(0.84 1)">83</text><text transform="translate(274.7 185.4) scale(0.84 1)">N/A</text><text transform="translate(283.7 181.3) scale(0.84 1)">121</text><text transform="translate(294.3 183.8) scale(0.84 1)">130</text><text transform="translate(260.8 192.0) scale(0.84 1)">108</text><text transform="translate(246.9 205.0) scale(0.84 1)">103</text><text transform="translate(259.2 219.8) scale(0.84 1)">40</text><text transform="translate(246.9 237.8) scale(0.84 1)">N/A</text><text transform="translate(301.0 151.1) scale(0.84 1)">79</text><text transform="translate(330.6 136.2) scale(0.84 1)">1</text><text transform="translate(340.8 137.0) scale(0.84 1)">209</text><text transform="translate(323.0 141.0) scale(0.84 1)">169</text><text transform="translate(323.5 149.9) scale(0.84 1)">117</text><text transform="translate(322.4 159.9) scale(0.84 1)">177</text><text transform="translate(333.0 161.6) scale(0.84 1)">141</text><text transform="translate(336.4 168.3) scale(0.84 1)">249</text><text transform="translate(341.4 176.1) scale(0.84 1)">202</text><text transform="translate(359.3 176.7) scale(0.84 1)">155</text><text transform="translate(320.2 183.9) scale(0.84 1)">135</text><text transform="translate(331.3 198.1) scale(0.84 1)">182</text><text transform="translate(344.7 200.7) scale(0.84 1)">184</text><text transform="translate(348.3 210.6) scale(0.84 1)">155</text><text transform="translate(347.4 224.0) scale(0.84 1)">N/A</text><text transform="translate(404.0 122.9) scale(0.84 1)">N/A</text><text transform="translate(425.4 146.8) scale(0.84 1)">35</text><text transform="translate(440.9 141.9) scale(0.84 1)">54</text><text transform="translate(435.0 169.3) scale(0.84 1)">56</text><text transform="translate(364.5 189.6) scale(0.84 1)">2</text><text transform="translate(368.3 188.4) scale(0.84 1)">260</text><text transform="translate(381.4 202.6) scale(0.84 1)">155</text><text transform="translate(402.8 193.1) scale(0.84 1)">71</text><text transform="translate(395.7 200.3) scale(0.84 1)">71</text><text transform="translate(419.5 188.4) scale(0.84 1)">43</text><text transform="translate(404.0 216.9) scale(0.84 1)">140</text><text transform="translate(404.0 252.6) scale(0.84 1)">38</text></g></svg><div class="abs" style="left:299px;top:18px;width:120px;height:98px;background:#fff;border-radius:11px;box-shadow:0 2px 4px rgba(0,0,0,0.25)">
  <div class="abs" style="left:0;top:11px;width:120px;text-align:center;font-size:10.5px;line-height:10.6px;color:#333">Bishkek<br>2020-12-30 8:00 AM<br>(LT)</div>
  <div class="abs" style="left:11px;top:44px;width:97px;height:43px;border:1px solid #0a3a6a;background:#fff">
    <div class="abs" style="left:0;top:0;width:95px;height:20px;background:#004a87"></div>
    <div class="abs" style="left:0;top:3.5px;width:61px;text-align:center;font-size:10.5px;font-weight:bold;color:#fff">Pollutant</div>
    <div class="abs" style="left:61px;top:3.5px;width:34px;text-align:center;font-size:10.5px;font-weight:bold;color:#fff">AQI</div>
    <div class="abs" style="left:61px;top:20px;width:34px;height:21px;background:#ff7e00;border-left:1px solid #0a3a6a"></div>
    <div class="abs" style="left:0;top:24px;width:61px;text-align:center;font-size:10.5px;color:#333">PM2.5</div>
    <div class="abs" style="left:61px;top:24px;width:34px;text-align:center;font-size:10.5px;font-weight:bold;color:#fff">110</div>
  </div>
</div>
<div class="abs" style="left:328px;top:110px;width:13px;height:13px;background:#fff;transform:rotate(45deg);box-shadow:1px 1px 2px rgba(0,0,0,0.2)"></div>
<div class="abs" style="left:320px;top:105px;width:30px;height:11px;background:#fff"></div></div>

<div class="ph abs" style="top:1px">Select a City</div>
<div class="sel abs" style="top:28px">Bishkek<span class="x">×</span><span class="c"></span></div>
<div class="ph abs" style="top:72px">Select a Parameter</div>
<div class="sel abs" style="top:99px">PM2.5<span class="x">×</span><span class="c"></span></div>
<div id="cbox" class="abs"><div class="n abs">Bishkek</div></div>
<div id="rss" class="abs">
  <svg width="27" height="26" viewBox="0 0 27 26" style="display:block"><circle cx="5.8" cy="20" r="2.7" fill="#fff"/>
  <path d="M3 11.4 A10.8 10.8 0 0 1 13.8 22.2" stroke="#fff" stroke-width="3.5" fill="none"/>
  <path d="M3 4 A18.2 18.2 0 0 1 21.2 22.2" stroke="#fff" stroke-width="3.7" fill="none"/></svg>
</div>
<div id="note" class="abs">Note: Values above 500 are considered Beyond the AQI. Follow<br>recommendations for the Hazardous category. Additional<br>information on reducing exposure to extremely high levels of particle<br>pollution is available <a>here</a>.</div>

<div id="t1" class="tab abs">AQI</div>
<div id="t2" class="tab abs">Concentration</div>
<div id="t3" class="tab abs">Historical</div>
<div id="tline" class="abs"></div>
<div id="learn" class="abs">Learn more about how the Air Quality Index [AQI] is calculated from the EPA <a>here</a>.</div>

<div id="chart" class="abs"><svg width="595" height="258" style="position:absolute;left:0;top:0"><text x="297.5" y="17.6" text-anchor="middle" font-size="12.5" fill="#333" letter-spacing="1.0">Bishkek - PM2.5</text><text x="45.5" y="185.4" text-anchor="end" font-size="8.5" letter-spacing="0.4" fill="#333">0</text><rect x="55.8" y="156.0" width="531.9" height="1" fill="#e6e6e6"/><text x="45.5" y="158.0" text-anchor="end" font-size="8.5" letter-spacing="0.4" fill="#333">100</text><rect x="55.8" y="128.5" width="531.9" height="1" fill="#e6e6e6"/><text x="45.5" y="130.5" text-anchor="end" font-size="8.5" letter-spacing="0.4" fill="#333">200</text><rect x="55.8" y="101.1" width="531.9" height="1" fill="#e6e6e6"/><text x="45.5" y="103.1" text-anchor="end" font-size="8.5" letter-spacing="0.4" fill="#333">300</text><rect x="55.8" y="73.6" width="531.9" height="1" fill="#e6e6e6"/><text x="45.5" y="75.6" text-anchor="end" font-size="8.5" letter-spacing="0.4" fill="#333">400</text><rect x="55.8" y="46.2" width="531.9" height="1" fill="#e6e6e6"/><text x="45.5" y="48.2" text-anchor="end" font-size="8.5" letter-spacing="0.4" fill="#333">500</text><rect x="55.8" y="183.4" width="531.9" height="1" fill="#ccd6eb"/><rect x="55.3" y="183.9" width="1" height="7" fill="#ccd6eb"/><rect x="77.5" y="183.9" width="1" height="7" fill="#ccd6eb"/><rect x="99.6" y="183.9" width="1" height="7" fill="#ccd6eb"/><rect x="121.8" y="183.9" width="1" height="7" fill="#ccd6eb"/><rect x="144.0" y="183.9" width="1" height="7" fill="#ccd6eb"/><rect x="166.1" y="183.9" width="1" height="7" fill="#ccd6eb"/><rect x="188.3" y="183.9" width="1" height="7" fill="#ccd6eb"/><rect x="210.4" y="183.9" width="1" height="7" fill="#ccd6eb"/><rect x="232.6" y="183.9" width="1" height="7" fill="#ccd6eb"/><rect x="254.8" y="183.9" width="1" height="7" fill="#ccd6eb"/><rect x="276.9" y="183.9" width="1" height="7" fill="#ccd6eb"/><rect x="299.1" y="183.9" width="1" height="7" fill="#ccd6eb"/><rect x="321.3" y="183.9" width="1" height="7" fill="#ccd6eb"/><rect x="343.4" y="183.9" width="1" height="7" fill="#ccd6eb"/><rect x="365.6" y="183.9" width="1" height="7" fill="#ccd6eb"/><rect x="387.7" y="183.9" width="1" height="7" fill="#ccd6eb"/><rect x="409.9" y="183.9" width="1" height="7" fill="#ccd6eb"/><rect x="432.1" y="183.9" width="1" height="7" fill="#ccd6eb"/><rect x="454.2" y="183.9" width="1" height="7" fill="#ccd6eb"/><rect x="476.4" y="183.9" width="1" height="7" fill="#ccd6eb"/><rect x="498.6" y="183.9" width="1" height="7" fill="#ccd6eb"/><rect x="520.7" y="183.9" width="1" height="7" fill="#ccd6eb"/><rect x="542.9" y="183.9" width="1" height="7" fill="#ccd6eb"/><rect x="565.0" y="183.9" width="1" height="7" fill="#ccd6eb"/><rect x="587.2" y="183.9" width="1" height="7" fill="#ccd6eb"/><rect x="61.1" y="162.8" width="11.6" height="21.1" fill="#ffff00" stroke="#4d3d10" stroke-width="1.2"/><text transform="translate(68.5 195.8) rotate(-45)" text-anchor="end" font-size="9.2" fill="#666">9 AM</text><rect x="83.2" y="159.3" width="11.6" height="24.6" fill="#ffff00" stroke="#4d3d10" stroke-width="1.2"/><text transform="translate(90.6 195.8) rotate(-45)" text-anchor="end" font-size="9.2" fill="#666">10 AM</text><rect x="105.4" y="157.6" width="11.6" height="26.3" fill="#ffff00" stroke="#4d3d10" stroke-width="1.2"/><text transform="translate(112.8 195.8) rotate(-45)" text-anchor="end" font-size="9.2" fill="#666">11 AM</text><rect x="127.6" y="158.4" width="11.6" height="25.5" fill="#ffff00" stroke="#4d3d10" stroke-width="1.2"/><text transform="translate(135.0 195.8) rotate(-45)" text-anchor="end" font-size="9.2" fill="#666">12 PM</text><rect x="149.7" y="157.1" width="11.6" height="26.8" fill="#ffff00" stroke="#4d3d10" stroke-width="1.2"/><text transform="translate(157.1 195.8) rotate(-45)" text-anchor="end" font-size="9.2" fill="#666">1 PM</text><rect x="171.9" y="154.9" width="11.6" height="29.0" fill="#ff7e00" stroke="#4d3d10" stroke-width="1.2"/><text transform="translate(179.3 195.8) rotate(-45)" text-anchor="end" font-size="9.2" fill="#666">2 PM</text><rect x="194.1" y="154.9" width="11.6" height="29.0" fill="#ff7e00" stroke="#4d3d10" stroke-width="1.2"/><text transform="translate(201.5 195.8) rotate(-45)" text-anchor="end" font-size="9.2" fill="#666">3 PM</text><rect x="216.2" y="157.1" width="11.6" height="26.8" fill="#ffff00" stroke="#4d3d10" stroke-width="1.2"/><text transform="translate(223.6 195.8) rotate(-45)" text-anchor="end" font-size="9.2" fill="#666">4 PM</text><rect x="238.4" y="154.3" width="11.6" height="29.6" fill="#ff7e00" stroke="#4d3d10" stroke-width="1.2"/><text transform="translate(245.8 195.8) rotate(-45)" text-anchor="end" font-size="9.2" fill="#666">5 PM</text><rect x="260.5" y="144.4" width="11.6" height="39.5" fill="#ff7e00" stroke="#4d3d10" stroke-width="1.2"/><text transform="translate(267.9 195.8) rotate(-45)" text-anchor="end" font-size="9.2" fill="#666">6 PM</text><rect x="282.7" y="139.2" width="11.6" height="44.7" fill="#ff0000" stroke="#4d3d10" stroke-width="1.2"/><text transform="translate(290.1 195.8) rotate(-45)" text-anchor="end" font-size="9.2" fill="#666">7 PM</text><rect x="304.9" y="138.7" width="11.6" height="45.2" fill="#ff0000" stroke="#4d3d10" stroke-width="1.2"/><text transform="translate(312.3 195.8) rotate(-45)" text-anchor="end" font-size="9.2" fill="#666">8 PM</text><rect x="327.0" y="138.7" width="11.6" height="45.2" fill="#ff0000" stroke="#4d3d10" stroke-width="1.2"/><text transform="translate(334.4 195.8) rotate(-45)" text-anchor="end" font-size="9.2" fill="#666">9 PM</text><rect x="349.2" y="139.2" width="11.6" height="44.7" fill="#ff0000" stroke="#4d3d10" stroke-width="1.2"/><text transform="translate(356.6 195.8) rotate(-45)" text-anchor="end" font-size="9.2" fill="#666">10 PM</text><rect x="371.4" y="138.7" width="11.6" height="45.2" fill="#ff0000" stroke="#4d3d10" stroke-width="1.2"/><text transform="translate(378.8 195.8) rotate(-45)" text-anchor="end" font-size="9.2" fill="#666">11 PM</text><rect x="393.5" y="140.0" width="11.6" height="43.9" fill="#ff0000" stroke="#4d3d10" stroke-width="1.2"/><text transform="translate(400.9 195.8) rotate(-45)" text-anchor="end" font-size="9.2" fill="#666">Dec 30, 2020 12 AM</text><rect x="415.7" y="141.4" width="11.6" height="42.5" fill="#ff0000" stroke="#4d3d10" stroke-width="1.2"/><text transform="translate(423.1 195.8) rotate(-45)" text-anchor="end" font-size="9.2" fill="#666">1 AM</text><rect x="437.8" y="142.2" width="11.6" height="41.7" fill="#ff0000" stroke="#4d3d10" stroke-width="1.2"/><text transform="translate(445.2 195.8) rotate(-45)" text-anchor="end" font-size="9.2" fill="#666">2 AM</text><rect x="460.0" y="141.4" width="11.6" height="42.5" fill="#ff0000" stroke="#4d3d10" stroke-width="1.2"/><text transform="translate(467.4 195.8) rotate(-45)" text-anchor="end" font-size="9.2" fill="#666">3 AM</text><rect x="482.2" y="143.6" width="11.6" height="40.3" fill="#ff7e00" stroke="#4d3d10" stroke-width="1.2"/><text transform="translate(489.6 195.8) rotate(-45)" text-anchor="end" font-size="9.2" fill="#666">4 AM</text><rect x="504.3" y="149.4" width="11.6" height="34.5" fill="#ff7e00" stroke="#4d3d10" stroke-width="1.2"/><text transform="translate(511.7 195.8) rotate(-45)" text-anchor="end" font-size="9.2" fill="#666">5 AM</text><rect x="526.5" y="142.2" width="11.6" height="41.7" fill="#ff0000" stroke="#4d3d10" stroke-width="1.2"/><text transform="translate(533.9 195.8) rotate(-45)" text-anchor="end" font-size="9.2" fill="#666">6 AM</text><rect x="548.7" y="151.3" width="11.6" height="32.6" fill="#ff7e00" stroke="#4d3d10" stroke-width="1.2"/><text transform="translate(556.1 195.8) rotate(-45)" text-anchor="end" font-size="9.2" fill="#666">7 AM</text><rect x="570.8" y="154.0" width="11.6" height="29.9" fill="#ff7e00" stroke="#4d3d10" stroke-width="1.2"/><text transform="translate(578.2 195.8) rotate(-45)" text-anchor="end" font-size="9.2" fill="#666">8 AM</text><text transform="translate(22.0 112.0) rotate(-90)" text-anchor="middle" font-size="9" fill="#333">AQI</text></svg></div>

<div id="cc" class="abs">
  <div id="cch" class="abs">
    <div class="abs" style="left:0;width:185px;top:5px;font-size:11px">Current Conditions</div>
    <div class="abs" style="left:0;width:185px;top:22px;font-size:9.1px">observed at</div>
    <div class="abs" style="left:0;width:185px;top:37px;font-size:11px">Dec 30, 2020 8:00 AM (LT)</div>
  </div>
  <div id="cco" class="abs">110 AQI<br>Unhealthy for Sensitive<br>Groups<br>PM2.5</div>
  <div id="hm" class="abs">
    <div class="abs" style="left:0;width:185px;top:7px;font-size:8.9px;font-weight:bold;color:#222">Health Message</div>
    <div class="abs" style="left:4px;width:181px;top:24.5px;font-size:9px;line-height:15.9px;text-align:left;color:#333">When AQI values are between 101 and 150, members of sensitive groups may experience health effects, but the general public is unlikely to be affected.</div>
  </div>
</div>
</body></html>
